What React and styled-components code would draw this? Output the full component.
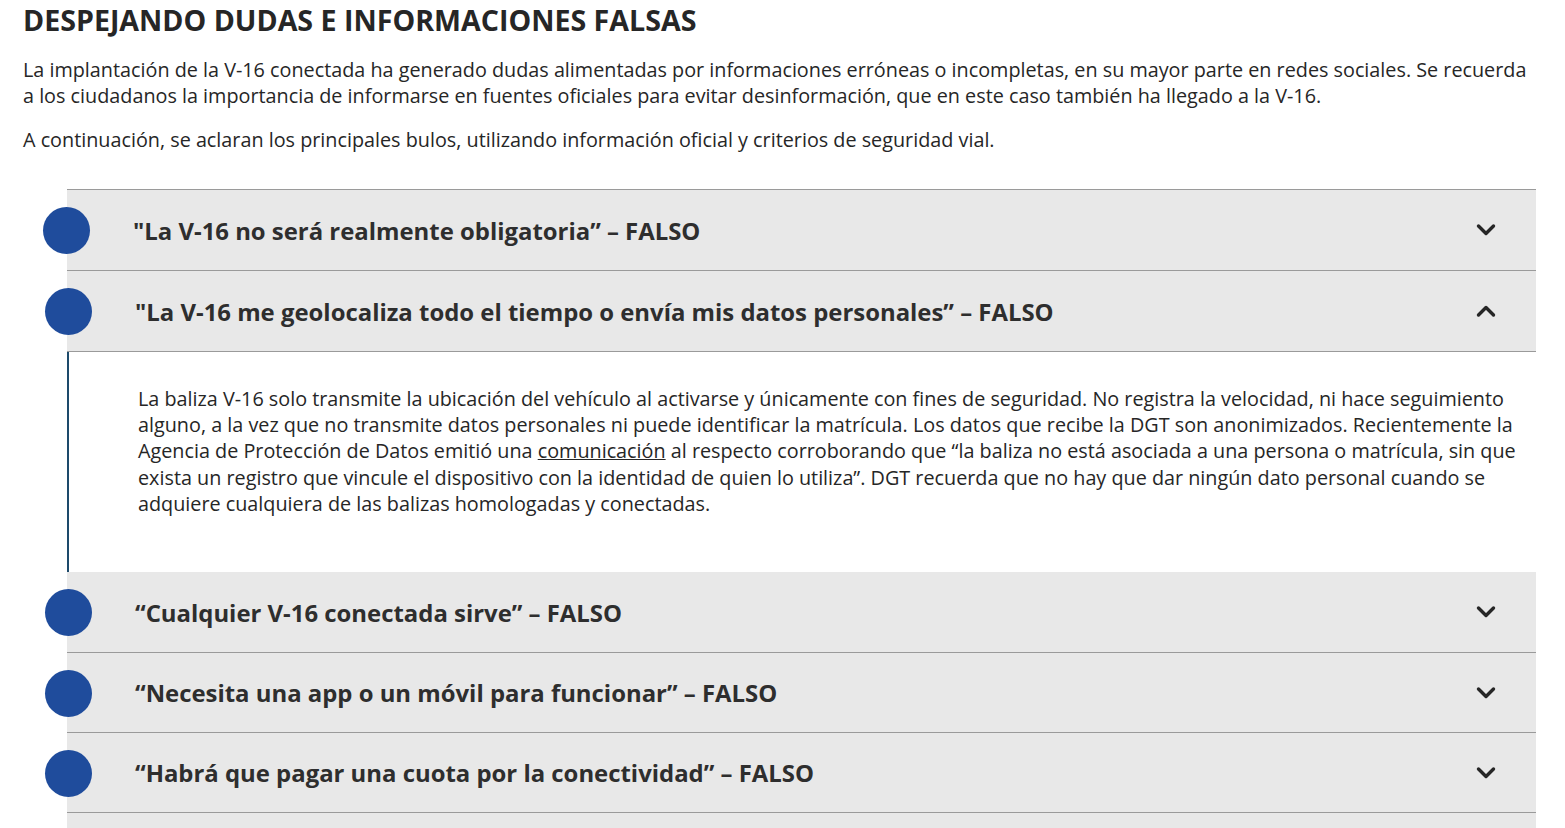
import React, { useState } from "react";
import styled, { createGlobalStyle } from "styled-components";

const GlobalStyle = createGlobalStyle`
  body {
    margin: 0;
    background: #ffffff;
    font-family: "Open Sans", "Liberation Sans", sans-serif;
    color: #333333;
  }
`;

const items = [
  {
    id: 1,
    title: "\"La V-16 no será realmente obligatoria” – FALSO",
  },
  {
    id: 2,
    title: "\"La V-16 me geolocaliza todo el tiempo o envía mis datos personales” – FALSO",
    body: true,
  },
  { id: 3, title: "“Cualquier V-16 conectada sirve” – FALSO" },
  { id: 4, title: "“Necesita una app o un móvil para funcionar” – FALSO" },
  { id: 5, title: "“Habrá que pagar una cuota por la conectividad” – FALSO" },
  { id: 6, title: "“La V-16 sustituye a los triángulos en todos los casos” – FALSO" },
];

const Chevron = ({ up }) => (
  <svg width="20" height="14" viewBox="0 0 20 14" aria-hidden="true">
    <path
      d={up ? "M2.5 11 L10 3.5 L17.5 11" : "M2.5 3 L10 10.5 L17.5 3"}
      fill="none"
      stroke="#262626"
      strokeWidth="3.4"
      strokeLinecap="round"
      strokeLinejoin="round"
    />
  </svg>
);

const App = () => {
  const [open, setOpen] = useState(2);

  return (
    <>
      <GlobalStyle />
      <Page>
        <Title>DESPEJANDO DUDAS E INFORMACIONES FALSAS</Title>
        <Text>
          La implantación de la V-16 conectada ha generado dudas alimentadas por informaciones erróneas o incompletas, en su mayor parte en redes sociales. Se recuerda a los ciudadanos la importancia de informarse en fuentes oficiales para evitar desinformación, que en este caso también ha llegado a la V-16.
        </Text>
        <Text>
          A continuación, se aclaran los principales bulos, utilizando información oficial y criterios de seguridad vial.
        </Text>

        <Timeline>
          {items.map((item) => {
            const isOpen = open === item.id;
            return (
              <Item key={item.id}>
                <Header
                  $tall={item.id <= 3}
                  onClick={() => setOpen(isOpen ? null : item.id)}
                >
                  <Dot $first={item.id === 1} />
                  <HeaderText $first={item.id === 1}>{item.title}</HeaderText>
                  <Toggle>
                    <Chevron up={isOpen} />
                  </Toggle>
                </Header>
                {isOpen && item.body && (
                  <Panel>
                    <PanelText>
                      La baliza V-16 solo transmite la ubicación del vehículo al activarse y únicamente con fines de seguridad. No registra la velocidad, ni hace seguimiento alguno, a la vez que no transmite datos personales ni puede identificar la matrícula. Los datos que recibe la DGT son anonimizados. Recientemente la Agencia de Protección de Datos emitió una <Link href="#">comunicación</Link> al respecto corroborando que “la baliza no está asociada a una persona o matrícula, sin que exista un registro que vincule el dispositivo con la identidad de quien lo utiliza”. DGT recuerda que no hay que dar ningún dato personal cuando se adquiere cualquiera de las balizas homologadas y conectadas.
                    </PanelText>
                  </Panel>
                )}
              </Item>
            );
          })}
        </Timeline>
      </Page>
    </>
  );
};

const Page = styled.div`
  padding: 0 29px 0 23px;
  height: 828px;
  overflow: hidden;
`;

const Title = styled.h2`
  margin: 0;
  padding-top: 2px;
  font-size: 28.6px;
  line-height: 36px;
  font-weight: 700;
  color: #262626;
`;

const Text = styled.p`
  margin: 19px 0 0;
  font-size: 19.8px;
  line-height: 26px;
  color: #262626;

  & + & {
    margin-top: 18px;
  }
`;

const Timeline = styled.div`
  position: relative;
  margin: 36px 0 0 44px;
  border-top: 1px solid #9a9a9a;

  &::before {
    content: "";
    position: absolute;
    left: 0;
    top: 60px;
    bottom: 0;
    width: 2px;
    background: #1d4a6b;
  }
`;

const Item = styled.div``;

const Header = styled.div`
  position: relative;
  display: flex;
  align-items: center;
  height: ${(p) => (p.$tall ? "80px" : "79px")};
  background: #e8e8e8;
  border-bottom: 1px solid #9a9a9a;
  padding: 0 40px 0 68px;
  cursor: pointer;
`;

const Dot = styled.span`
  position: absolute;
  left: ${(p) => (p.$first ? "-24px" : "-22px")};
  top: 50%;
  width: 47px;
  height: 47px;
  margin-top: -23px;
  border-radius: 50%;
  background: #1f4c9c;
`;

const HeaderText = styled.h3`
  flex: 1;
  margin: 0 0 0 ${(p) => (p.$first ? "-2px" : "0")};
  font-size: 23.9px;
  font-weight: 700;
  color: #2e2e2e;
`;

const Toggle = styled.span`
  display: flex;
  align-items: center;
`;

const Panel = styled.div`
  background: #ffffff;
  height: 220px;
  padding: 34px 12px 0 71px;
  box-sizing: border-box;
`;

const PanelText = styled.p`
  margin: 0;
  font-size: 19.8px;
  line-height: 26.2px;
  color: #262626;
`;

const Link = styled.a`
  color: #262626;
  text-decoration: underline;
`;

export default App;
